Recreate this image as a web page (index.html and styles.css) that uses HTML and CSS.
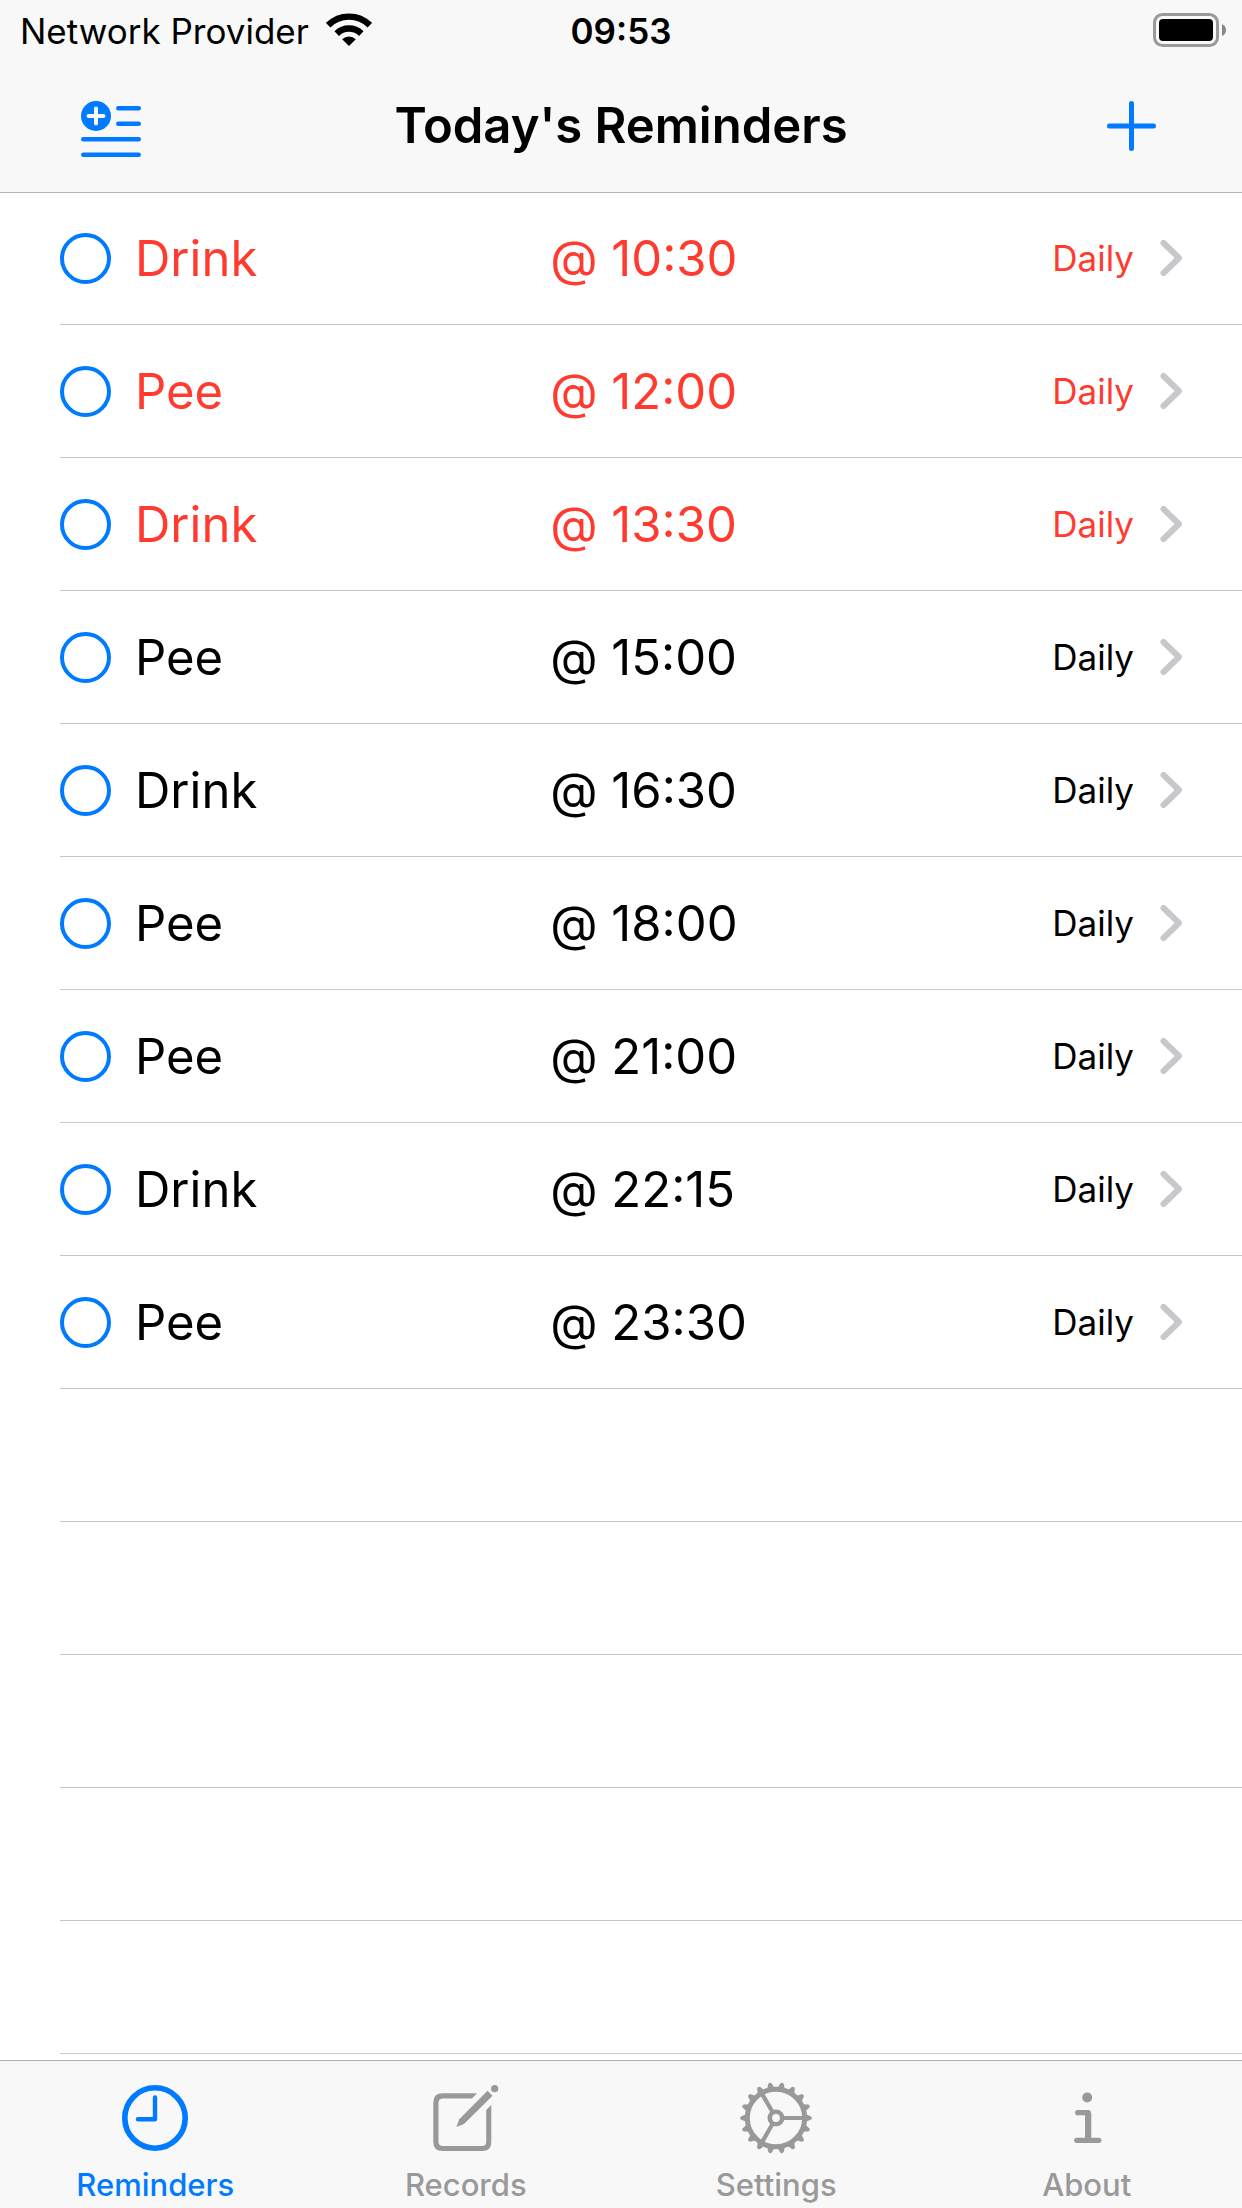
FILE: index.html
```html
<!DOCTYPE html>
<html lang="en">
<head>
<meta charset="utf-8">
<meta name="viewport" content="width=device-width, initial-scale=1">
<title>Today's Reminders</title>
<link rel="stylesheet" href="styles.css">
</head>
<body>
<div class="screen">
  <header class="header">
    <div class="status">
      <div class="carrier">
        <span class="status-text">Network Provider</span>
        <svg class="wifi" viewBox="0 0 46 34" aria-hidden="true">
          <g fill="none" stroke="#000" stroke-width="6.400">
            <path d="M2.200 12.200a29.500 29.500 0 0 1 41.600 0"/>
            <path d="M10.700 20.600a17.500 17.500 0 0 1 24.600 0"/>
          </g>
          <path d="M16.200 26.300a9.800 9.800 0 0 1 13.600 0L23 33z"/>
        </svg>
      </div>
      <time class="clock status-text">09:53</time>
      <svg class="battery" viewBox="0 0 74 34" role="img" aria-label="Battery full">
        <rect x="1.500" y="1.500" width="63" height="31" rx="8" fill="none" stroke="#999" stroke-width="3"/>
        <rect x="6" y="6" width="54" height="22" rx="4"/>
        <path d="M69 11q4 2 4 6t-4 6z" fill="#888"/>
      </svg>
    </div>
    <nav class="navbar" aria-label="Actions">
      <button class="bar-button" type="button" aria-label="Add from list">
        <svg class="list-icon" viewBox="0 -6 60 62" aria-hidden="true">
          <circle cx="15" cy="15" r="15" fill="currentColor"/>
          <path d="M15 7.500v15M7.500 15h15" stroke="#f8f8f8" stroke-width="4" stroke-linecap="round"/>
          <path d="M37.300 7.200h20.400M37.300 22.700h20.400M2.300 38.200h55.400M2.300 53.700h55.400" stroke="currentColor" stroke-width="4.600" stroke-linecap="round"/>
        </svg>
      </button>
      <h1 class="title">Today's Reminders</h1>
      <button class="bar-button bar-button-end" type="button" aria-label="Add reminder">
        <svg class="plus-icon" viewBox="-4 0 58 50" aria-hidden="true">
          <path d="M24.500 2.500v45M2.500 25h44" stroke="currentColor" stroke-width="5" stroke-linecap="round"/>
        </svg>
      </button>
    </nav>
  </header>

  <svg width="0" height="0" class="symbols" aria-hidden="true">
    <symbol id="chevron" viewBox="0 0 22 36">
      <path d="M3.500 3L19 18L3.500 33" fill="none" stroke="currentColor" stroke-width="6" stroke-linecap="round" stroke-linejoin="round"/>
    </symbol>
  </svg>

  <main class="content">
    <ul class="list">
      <li class="row due"><input class="check" type="checkbox" id="r1"><label class="name" for="r1">Drink</label><span class="time"><span class="at">@</span> 10:30</span><a class="detail" href="#r1">Daily<svg class="chevron" aria-hidden="true"><use href="#chevron"/></svg></a></li>
      <li class="row due"><input class="check" type="checkbox" id="r2"><label class="name" for="r2">Pee</label><span class="time"><span class="at">@</span> 12:00</span><a class="detail" href="#r2">Daily<svg class="chevron" aria-hidden="true"><use href="#chevron"/></svg></a></li>
      <li class="row due"><input class="check" type="checkbox" id="r3"><label class="name" for="r3">Drink</label><span class="time"><span class="at">@</span> 13:30</span><a class="detail" href="#r3">Daily<svg class="chevron" aria-hidden="true"><use href="#chevron"/></svg></a></li>
      <li class="row"><input class="check" type="checkbox" id="r4"><label class="name" for="r4">Pee</label><span class="time"><span class="at">@</span> 15:00</span><a class="detail" href="#r4">Daily<svg class="chevron" aria-hidden="true"><use href="#chevron"/></svg></a></li>
      <li class="row"><input class="check" type="checkbox" id="r5"><label class="name" for="r5">Drink</label><span class="time"><span class="at">@</span> 16:30</span><a class="detail" href="#r5">Daily<svg class="chevron" aria-hidden="true"><use href="#chevron"/></svg></a></li>
      <li class="row"><input class="check" type="checkbox" id="r6"><label class="name" for="r6">Pee</label><span class="time"><span class="at">@</span> 18:00</span><a class="detail" href="#r6">Daily<svg class="chevron" aria-hidden="true"><use href="#chevron"/></svg></a></li>
      <li class="row"><input class="check" type="checkbox" id="r7"><label class="name" for="r7">Pee</label><span class="time"><span class="at">@</span> 21:00</span><a class="detail" href="#r7">Daily<svg class="chevron" aria-hidden="true"><use href="#chevron"/></svg></a></li>
      <li class="row"><input class="check" type="checkbox" id="r8"><label class="name" for="r8">Drink</label><span class="time"><span class="at">@</span> 22:15</span><a class="detail" href="#r8">Daily<svg class="chevron" aria-hidden="true"><use href="#chevron"/></svg></a></li>
      <li class="row"><input class="check" type="checkbox" id="r9"><label class="name" for="r9">Pee</label><span class="time"><span class="at">@</span> 23:30</span><a class="detail" href="#r9">Daily<svg class="chevron" aria-hidden="true"><use href="#chevron"/></svg></a></li>
    </ul>
    <div class="blank" aria-hidden="true">
      <div class="row"></div>
      <div class="row"></div>
      <div class="row"></div>
      <div class="row"></div>
      <div class="row"></div>
    </div>
  </main>

  <nav class="tabs" aria-label="Sections">
    <a class="tab active" href="#reminders" aria-current="page">
      <svg class="tab-icon" viewBox="0 0 72 72" aria-hidden="true">
        <g fill="none" stroke="currentColor">
          <circle cx="36" cy="36" r="30.200" stroke-width="5.600"/>
          <path d="M36 15.500V37.200H19" stroke-width="4.400" stroke-linecap="round" stroke-linejoin="round"/>
        </g>
      </svg>
      Reminders
    </a>
    <a class="tab" href="#records">
      <svg class="tab-icon" viewBox="0 0 72 72" aria-hidden="true">
        <path d="M47 11.300H12.500Q3.300 11.300 3.300 20.500V60Q3.300 69 12.500 69H52.300Q61.300 69 61.300 60V23L56.200 28V59.500Q56.200 64 52 64H13Q8.500 64 8.500 59.500V21Q8.500 16.500 13 16.500H42z" fill="currentColor"/>
        <path d="M26.300 45l3-7.700L57.500 8.800l5 4.900L34 42z" fill="currentColor"/>
        <circle cx="64.700" cy="6.700" r="3.600" fill="currentColor"/>
      </svg>
      Records
    </a>
    <a class="tab" href="#settings">
      <svg class="tab-icon" viewBox="0 0 72 72" aria-hidden="true">
        <defs>
          <path id="tooth" d="M64 31.500L70.700 34.200Q73 36 70.700 37.800L64 40.500z"/>
          <g id="teeth"><use href="#tooth"/><use href="#tooth" transform="rotate(20 36 36)"/><use href="#tooth" transform="rotate(40 36 36)"/><use href="#tooth" transform="rotate(60 36 36)"/><use href="#tooth" transform="rotate(80 36 36)"/><use href="#tooth" transform="rotate(100 36 36)"/></g>
        </defs>
        <g fill="currentColor"><use href="#teeth"/><use href="#teeth" transform="rotate(120 36 36)"/><use href="#teeth" transform="rotate(240 36 36)"/></g>
        <g fill="none" stroke="currentColor">
          <circle cx="36" cy="36" r="28.700" stroke-width="5"/>
          <circle cx="36" cy="36" r="6.200" stroke-width="4.600"/>
          <path d="M43 36h20M32.500 30L22.500 12.600M32.500 42L22.500 59.400" stroke-width="4.200"/>
        </g>
      </svg>
      Settings
    </a>
    <a class="tab" href="#about">
      <svg class="tab-icon" viewBox="0 0 72 72" aria-hidden="true">
        <circle cx="36.200" cy="15.500" r="5" fill="currentColor"/>
        <path d="M26.700 30.700H37.300V58M25.700 58.300H47.800" fill="none" stroke="currentColor" stroke-width="5.200" stroke-linecap="round" stroke-linejoin="round"/>
        <path d="M34 31h6.300v26H34z" fill="currentColor"/>
      </svg>
      About
    </a>
  </nav>
</div>
</body>
</html>
```

FILE: styles.css
```css
* {
  box-sizing: border-box;
}

body {
  margin: 0;
  background: #fff;
  color: #000;
  font-family: Inter, "Liberation Sans", sans-serif;
}

.screen {
  display: flex;
  flex-direction: column;
  min-height: 100vh;
}

.header {
  background: #f8f8f8;
  box-shadow: 0 1px 0 #b2b2b2;
  z-index: 1;
}

.status {
  display: grid;
  grid-template-columns: 1fr auto 1fr;
  align-items: center;
  height: 60px;
  padding: 0 15px;
  font-size: 35px;
  line-height: 44px;
}

.status-text {
  padding-top: 2px;
}

.carrier {
  display: flex;
  align-items: center;
  gap: 17px;
  padding-left: 5px;
}

.wifi {
  width: 46px;
  height: 34px;
}

.clock {
  font-weight: 600;
}

.battery {
  justify-self: end;
  width: 74px;
  height: 34px;
}

.navbar {
  display: grid;
  grid-template-columns: 1fr auto 1fr;
  align-items: center;
  height: 132px;
  padding: 0 81px;
}

.bar-button {
  display: flex;
  justify-self: start;
  padding: 0;
  border: 0;
  background: none;
  color: #007aff;
}

.bar-button-end {
  justify-self: end;
}

.list-icon {
  width: 60px;
  height: 62px;
}

.plus-icon {
  width: 58px;
  height: 50px;
}

.title {
  margin: 0;
  font-size: 49px;
  font-weight: 600;
  line-height: 60px;
}

.symbols {
  position: absolute;
}

.content {
  flex: 1;
}

.list {
  margin: 0;
  padding: 0;
  list-style: none;
}

.row {
  display: grid;
  grid-template-columns: 51px 7fr 8fr auto;
  align-items: center;
  height: 133px;
  margin-left: 60px;
  padding-right: 60px;
  border-bottom: 1px solid #c8c7cc;
  font-size: 49px;
  line-height: 60px;
}

.due,
.due .detail {
  color: #ff3b30;
}

.check {
  appearance: none;
  width: 51px;
  height: 51px;
  margin: 0;
  border: 4px solid #007aff;
  border-radius: 50%;
}

.check:checked {
  background: #007aff;
}

.name,
.time {
  padding-top: 2px;
}

.name {
  padding-left: 24px;
}

/* Keeps the sign on the baseline instead of raising it beside digits. */
.at {
  font-feature-settings: "calt" 0;
}

.detail {
  display: flex;
  align-items: center;
  gap: 26px;
  color: #000;
  font-size: 35px;
  line-height: 44px;
  text-decoration: none;
}

.chevron {
  width: 22px;
  height: 36px;
  color: #c7c7cc;
}

.tabs {
  display: grid;
  grid-template-columns: repeat(4, 1fr);
  height: 148px;
  border-top: 1px solid #b2b2b2;
  background: #f8f8f8;
}

.tab {
  display: flex;
  flex-direction: column;
  align-items: center;
  gap: 13px;
  padding-top: 21px;
  color: #999;
  font-size: 31px;
  font-weight: 500;
  line-height: 36px;
  text-decoration: none;
}

.active {
  color: #007aff;
}

.tab-icon {
  width: 72px;
  height: 72px;
}
```
